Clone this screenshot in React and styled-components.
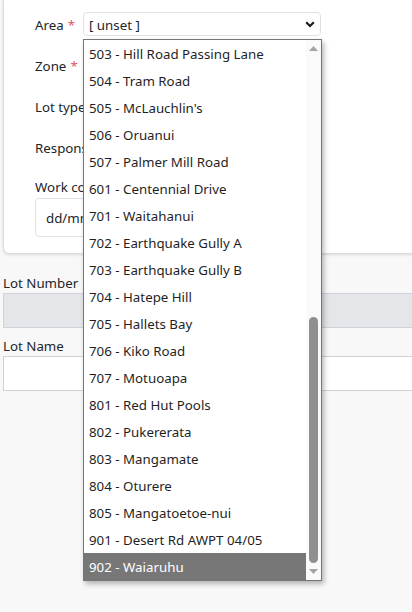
import React from "react";
import styled, { createGlobalStyle } from "styled-components";

const GlobalStyle = createGlobalStyle`
  html, body { margin: 0; padding: 0; background: #f8f8f8; }
  body { font-family: "Noto Sans", "Open Sans", sans-serif; color: #212529; }
  * { box-sizing: border-box; }
`;

const Page = styled.div`
  position: relative;
  width: 412px;
  height: 612px;
  overflow: hidden;
  padding-left: 3px;
`;

const Card = styled.div`
  margin-top: -8px;
  margin-right: -12px;
  background: #fff;
  border: 1px solid #dcdcdc;
  border-radius: 6px;
  box-shadow: 0 1px 3px rgba(0, 0, 0, 0.12);
  padding: 19px 0 16px 31px;
  display: flex;
  flex-direction: column;
`;

const FieldRow = styled.div`
  display: grid;
  grid-template-columns: 48px 238px;
  align-items: center;
  height: 24px;
  margin-bottom: 17px;
`;

const Label = styled.span`
  font-size: 13.3px;
  line-height: 20px;
  white-space: nowrap;
  color: #212529;
  padding-top: 1px;
`;

const Req = styled.span`
  color: #e8535f;
  margin-left: 4px;
`;

const Select = styled.div`
  position: relative;
  height: 24px;
  border: 1px solid #dee2e6;
  border-radius: 4px;
  background: #fff;
  font-size: 13.3px;
  line-height: 22px;
  padding: 1px 5px 0 5px;
  display: flex;
  align-items: center;
  justify-content: space-between;
`;

const StackLabel = styled(Label)`
  display: block;
  margin-bottom: 1px;
`;

const DateInput = styled.div`
  width: 200px;
  height: 39px;
  border: 1px solid #dee2e6;
  border-radius: 4px;
  font-size: 13.3px;
  display: flex;
  align-items: center;
  padding: 1px 0 0 10px;
`;

const Section = styled.div`
  display: flex;
  flex-direction: column;
  margin-right: -4px;
`;

const OuterLabel = styled(Label)`
  display: block;
  margin-top: ${(p) => p.$top}px;
`;

const TextBox = styled.div`
  height: 35px;
  border: 1px solid #cfd2d6;
  background: ${(p) => (p.$disabled ? "#e5e6ea" : "#fff")};
`;

const Dropdown = styled.div`
  position: absolute;
  left: 83px;
  top: 39px;
  width: 239px;
  height: 542px;
  border: 1px solid #767676;
  background: #fff;
  box-shadow: 2px 3px 5px rgba(0, 0, 0, 0.28);
  display: flex;
`;

const Options = styled.div`
  flex: 1;
  display: flex;
  flex-direction: column;
`;

const Option = styled.div`
  height: 27px;
  line-height: 26px;
  padding: 1px 0 0 5px;
  font-size: 13.3px;
  white-space: nowrap;
  background: ${(p) => (p.$selected ? "#777777" : "transparent")};
  color: ${(p) => (p.$selected ? "#ffffff" : "#1f1f1f")};
`;

const Scrollbar = styled.div`
  width: 15px;
  background: #fafafa;
  display: flex;
  flex-direction: column;
  align-items: center;
`;

const Arrow = styled.div`
  height: 17px;
  width: 15px;
  display: flex;
  align-items: center;
  justify-content: center;
`;

const Track = styled.div`
  flex: 1;
  width: 100%;
  display: flex;
  flex-direction: column;
  justify-content: flex-end;
  align-items: center;
`;

const Thumb = styled.div`
  width: 9px;
  height: 246px;
  border-radius: 5px;
  background: #8f8f8f;
`;

const items = [
  "503 - Hill Road Passing Lane",
  "504 - Tram Road",
  "505 - McLauchlin's",
  "506 - Oruanui",
  "507 - Palmer Mill Road",
  "601 - Centennial Drive",
  "701 - Waitahanui",
  "702 - Earthquake Gully A",
  "703 - Earthquake Gully B",
  "704 - Hatepe Hill",
  "705 - Hallets Bay",
  "706 - Kiko Road",
  "707 - Motuoapa",
  "801 - Red Hut Pools",
  "802 - Pukererata",
  "803 - Mangamate",
  "804 - Oturere",
  "805 - Mangatoetoe-nui",
  "901 - Desert Rd AWPT 04/05",
  "902 - Waiaruhu",
];

const Chevron = () => (
  <svg width="10" height="7" viewBox="0 0 10 7">
    <polyline points="1.2,1.3 5,5 8.8,1.3" fill="none" stroke="#1b1b1b" strokeWidth="2.2" />
  </svg>
);

const Tri = ({ up }) => (
  <svg width="9" height="5" viewBox="0 0 9 5">
    <polygon points={up ? "0,5 4.5,0 9,5" : "0,0 4.5,5 9,0"} fill="#a3a3a3" />
  </svg>
);

export default function App() {
  return (
    <Page>
      <GlobalStyle />
      <Card>
        <FieldRow>
          <Label>
            Area<Req>*</Req>
          </Label>
          <Select>
            <span>[ unset ]</span>
            <Chevron />
          </Select>
        </FieldRow>
        <FieldRow>
          <Label>
            Zone<Req>*</Req>
          </Label>
          <Select />
        </FieldRow>
        <FieldRow>
          <Label>Lot type</Label>
          <Select />
        </FieldRow>
        <FieldRow>
          <Label>Responsible</Label>
          <Select />
        </FieldRow>
        <StackLabel>Work completed</StackLabel>
        <DateInput>dd/mm/yyyy</DateInput>
      </Card>
      <Section>
        <OuterLabel $top={18}>Lot Number</OuterLabel>
        <TextBox $disabled />
        <OuterLabel $top={7}>Lot Name</OuterLabel>
        <TextBox />
      </Section>
      <Dropdown>
        <Options>
          {items.map((t, i) => (
            <Option key={t} $selected={i === items.length - 1}>
              {t}
            </Option>
          ))}
        </Options>
        <Scrollbar>
          <Arrow>
            <Tri up />
          </Arrow>
          <Track>
            <Thumb />
          </Track>
          <Arrow>
            <Tri />
          </Arrow>
        </Scrollbar>
      </Dropdown>
    </Page>
  );
}
